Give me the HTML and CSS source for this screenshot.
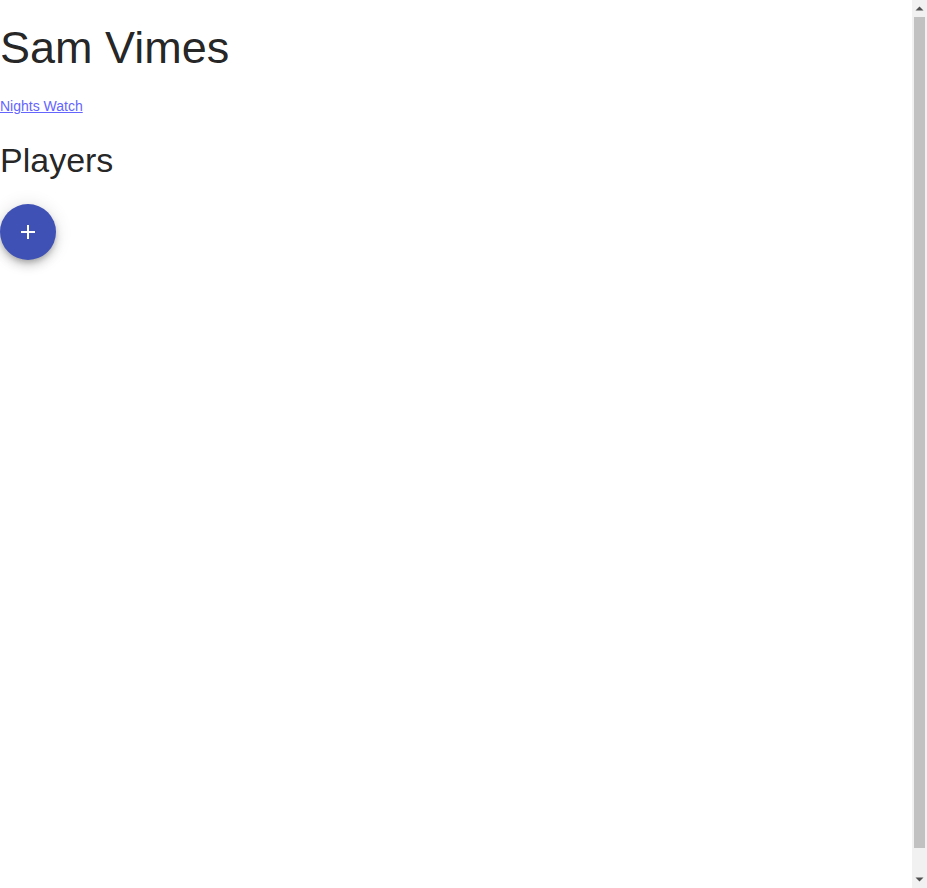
FILE: index.html
```html
<!DOCTYPE html>
<html lang="en">
<head>
<meta charset="utf-8">
<title>Sam Vimes</title>
<link rel="stylesheet" href="styles.css">
</head>
<body>
<div class="frame">
  <main class="page">
    <h1 class="title">Sam Vimes</h1>
    <a class="team-link" href="#">Nights Watch</a>
    <h2 class="section-title">Players</h2>
    <button class="fab" type="button" aria-label="add">
      <svg viewBox="0 0 24 24" width="24" height="24" aria-hidden="true"><path d="M19 13h-6v6h-2v-6H5v-2h6V5h2v6h6v2z"/></svg>
    </button>
  </main>
  <div class="scrollbar" aria-hidden="true">
    <div class="sb-btn">
      <svg viewBox="0 0 15 17" width="15" height="17"><path d="M3.5 10.5h8L7.5 6.5z"/></svg>
    </div>
    <div class="sb-track">
      <div class="sb-thumb"></div>
    </div>
    <div class="sb-btn">
      <svg viewBox="0 0 15 17" width="15" height="17"><path d="M3.5 6.5h8L7.5 10.5z"/></svg>
    </div>
  </div>
</div>
</body>
</html>
```
FILE: styles.css
```css
html, body {
  margin: 0;
  padding: 0;
  background: #fff;
  overflow: hidden;
}
body {
  font-family: "Liberation Sans", Arial, sans-serif;
  color: rgba(0, 0, 0, 0.87);
}
.frame {
  display: flex;
  height: 100vh;
}
.page {
  flex: 1;
  display: flex;
  flex-direction: column;
  align-items: flex-start;
}
.title {
  margin: 22px 0 0 0;
  font-size: 45px;
  font-weight: 400;
  line-height: 1.167;
}
.team-link {
  margin-top: 21px;
  font-size: 14px;
  line-height: 20px;
  color: #6464ff;
  text-decoration: underline;
}
.section-title {
  margin: 24px 0 0 0;
  font-size: 34px;
  font-weight: 400;
  line-height: 1.235;
}
.fab {
  margin-top: 23px;
  width: 56px;
  height: 56px;
  border: 0;
  padding: 0;
  border-radius: 50%;
  background: #3f51b5;
  display: flex;
  align-items: center;
  justify-content: center;
  box-shadow: 0 3px 5px -1px rgba(0,0,0,0.2), 0 6px 10px 0 rgba(0,0,0,0.14), 0 1px 18px 0 rgba(0,0,0,0.12);
  cursor: pointer;
}
.fab svg {
  fill: #fff;
}
.scrollbar {
  width: 15px;
  flex: 0 0 15px;
  background: #f1f1f1;
  display: flex;
  flex-direction: column;
}
.sb-btn {
  height: 17px;
  flex: 0 0 17px;
}
.sb-btn svg {
  display: block;
  fill: #505050;
}
.sb-track {
  flex: 1;
  padding: 0 2px;
}
.sb-thumb {
  height: 831px;
  background: #c1c1c1;
}
```
